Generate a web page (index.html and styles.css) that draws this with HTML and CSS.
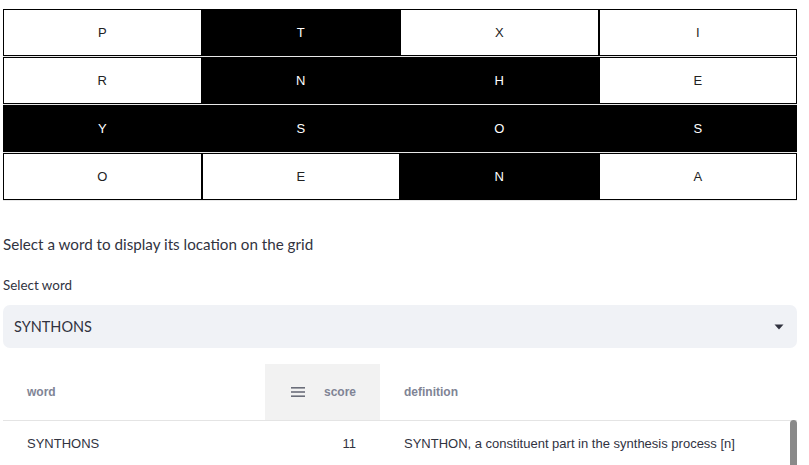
FILE: index.html
```html
<!DOCTYPE html>
<html>
<head>
<meta charset="utf-8">
<link rel="stylesheet" href="styles.css">
</head>
<body>
<div class="page">
  <div class="grid">
    <div class="row"><div class="cell w">P</div><div class="cell b">T</div><div class="cell w">X</div><div class="cell w">I</div></div>
    <div class="row"><div class="cell w">R</div><div class="cell b">N</div><div class="cell b">H</div><div class="cell w">E</div></div>
    <div class="row"><div class="cell b">Y</div><div class="cell b">S</div><div class="cell b">O</div><div class="cell b">S</div></div>
    <div class="row"><div class="cell w">O</div><div class="cell w">E</div><div class="cell b">N</div><div class="cell w">A</div></div>
  </div>

  <p class="intro">Select a word to display its location on the grid</p>

  <label class="label">Select word</label>
  <div class="select">
    <span class="select-value">SYNTHONS</span>
    <svg class="caret" width="10" height="6" viewBox="0 0 10 6"><path d="M0.5 0.5 L9.5 0.5 L5 5.5 Z" fill="#31333f"/></svg>
  </div>

  <div class="df">
    <div class="df-head">
      <div class="col c-word">word</div>
      <div class="col c-score hl">
        <svg class="menu" width="14" height="10" viewBox="0 0 14 10"><rect x="0" y="0" width="14" height="1.6" fill="#6b6e7a"/><rect x="0" y="4.2" width="14" height="1.6" fill="#6b6e7a"/><rect x="0" y="8.4" width="14" height="1.6" fill="#6b6e7a"/></svg>
        <span>score</span>
      </div>
      <div class="col c-def">definition</div>
    </div>
    <div class="df-row">
      <div class="col c-word">SYNTHONS</div>
      <div class="col c-score num">11</div>
      <div class="col c-def">SYNTHON, a constituent part in the synthesis process [n]</div>
    </div>
    <div class="scrollbar"></div>
  </div>
</div>
</body>
</html>
```

FILE: styles.css
```css
html, body {
  margin: 0;
  padding: 0;
  background: #ffffff;
}
.page {
  padding: 9px 12px 0 3px;
  font-family: "Lato", "Noto Sans", sans-serif;
  color: #31333f;
}
.grid {
  width: 794px;
}
.row {
  display: flex;
  border-bottom: 1px solid #e8e8e8;
}
.cell {
  flex: 1;
  height: 47px;
  box-sizing: border-box;
  border: 1px solid #000;
  display: flex;
  align-items: center;
  justify-content: center;
  font-family: "Liberation Sans", Arial, sans-serif;
  font-size: 13px;
}
.cell.w { background: #fff; color: #222; }
.cell.b { background: #000; color: #fff; }

.intro {
  margin: 31px 0 0 0;
  font-size: 15.2px;
  line-height: 24px;
}
.label {
  display: block;
  margin-top: 20px;
  font-size: 13.4px;
  line-height: 18px;
}
.select {
  margin-top: 11px;
  height: 43px;
  background: #f0f2f6;
  border-radius: 7px;
  display: flex;
  align-items: center;
  justify-content: space-between;
  padding: 0 13px 0 11px;
  box-sizing: border-box;
  font-size: 14.5px;
}
.df {
  position: relative;
  margin-top: 16px;
  font-family: "Liberation Sans", Arial, sans-serif;
  font-size: 13px;
}
.df-head, .df-row {
  display: flex;
}
.df-head {
  height: 56px;
  border-bottom: 1px solid #e4e4e4;
  color: #808495;
  font-weight: bold;
  font-size: 12px;
}
.df-row {
  height: 45px;
  color: #31333f;
}
.col {
  display: flex;
  align-items: center;
  box-sizing: border-box;
  padding: 0 24px;
}
.c-word { width: 262px; }
.c-score { width: 115px; justify-content: flex-end; }
.c-def { flex: 1; }
.hl { background: #f2f2f2; }
.menu { margin-right: 19px; }
.scrollbar {
  position: absolute;
  right: 0;
  top: 56px;
  width: 7px;
  height: 60px;
  background: #8a8a8a;
  border-radius: 4px;
}
```
